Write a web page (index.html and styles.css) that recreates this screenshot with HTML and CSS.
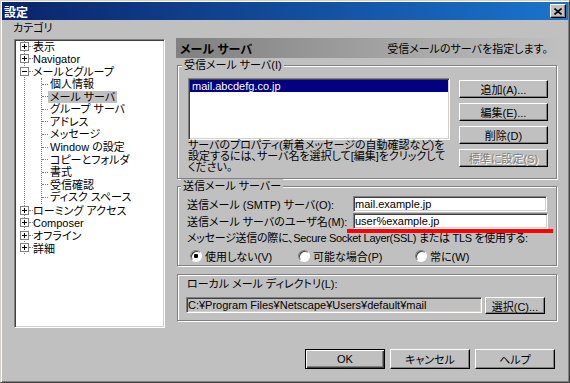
FILE: index.html
```html
<!DOCTYPE html>
<html lang="ja">
<head>
  <meta charset="UTF-8">
  <title>設定</title>
  <link rel="stylesheet" href="styles.css">
</head>
<body>

  <div class="window">
    <div class="titlebar">
      <span class="title">設定</span>
      <span class="close">
        <svg width="8" height="7" viewBox="0 0 8 7"><path d="M0.5 0.5 L7.5 6.5 M7.5 0.5 L0.5 6.5" stroke="#000" stroke-width="1.6"/></svg>
      </span>
    </div>

    <div class="main">
      <!-- category tree -->
      <div class="category">
        <div class="cat-label">カテゴリ</div>
        <div class="tree">
          <ul class="root">
            <li><div class="row"><span class="box plus"></span><span class="dash"></span><span class="label">表示</span></div></li>
            <li><div class="row"><span class="box plus"></span><span class="dash"></span><span class="label">Navigator</span></div></li>
            <li>
              <div class="row"><span class="box minus"></span><span class="dash"></span><span class="label">メールとグループ</span></div>
              <ul class="children">
                <li><div class="row"><span class="dash"></span><span class="label">個人情報</span></div></li>
                <li><div class="row"><span class="dash"></span><span class="label selected">メール サーバ</span></div></li>
                <li><div class="row"><span class="dash"></span><span class="label">グループ サーバ</span></div></li>
                <li><div class="row"><span class="dash"></span><span class="label">アドレス</span></div></li>
                <li><div class="row"><span class="dash"></span><span class="label">メッセージ</span></div></li>
                <li><div class="row"><span class="dash"></span><span class="label">Window の設定</span></div></li>
                <li><div class="row"><span class="dash"></span><span class="label">コピーとフォルダ</span></div></li>
                <li><div class="row"><span class="dash"></span><span class="label">書式</span></div></li>
                <li><div class="row"><span class="dash"></span><span class="label">受信確認</span></div></li>
                <li><div class="row"><span class="dash"></span><span class="label">ディスク スペース</span></div></li>
              </ul>
            </li>
            <li><div class="row"><span class="box plus"></span><span class="dash"></span><span class="label">ローミング アクセス</span></div></li>
            <li><div class="row"><span class="box plus"></span><span class="dash"></span><span class="label">Composer</span></div></li>
            <li><div class="row"><span class="box plus"></span><span class="dash"></span><span class="label">オフライン</span></div></li>
            <li><div class="row"><span class="box plus"></span><span class="dash"></span><span class="label">詳細</span></div></li>
          </ul>
        </div>
      </div>

      <!-- settings page -->
      <div class="settings">
        <div class="page-head">
          <span class="page-title">メール サーバ</span>
          <span class="page-desc">受信メールのサーバを指定します。</span>
        </div>

        <fieldset class="group incoming">
          <legend>受信メール サーバ(I)</legend>
          <div class="incoming-body">
            <div class="server-col">
              <div class="listbox">
                <div class="list-item selected">mail.abcdefg.co.jp</div>
              </div>
              <p class="hint">サーバのプロパティ(新着メッセージの自動確認など)を<br>設定するには、サーバ名を選択して[編集]をクリックして<br>ください。</p>
            </div>
            <div class="btn-col">
              <button class="btn">追加(A)...</button>
              <button class="btn">編集(E)...</button>
              <button class="btn">削除(D)</button>
              <button class="btn disabled">標準に設定(S)</button>
            </div>
          </div>
        </fieldset>

        <fieldset class="group outgoing">
          <legend>送信メール サーバー</legend>
          <div class="field-row">
            <label class="field-label">送信メール (SMTP) サーバ(O):</label>
            <input class="text" type="text" value="mail.example.jp">
          </div>
          <div class="field-row">
            <label class="field-label">送信メール サーバのユーザ名(M):</label>
            <span class="user-field"><input class="text" type="text" value="user%example.jp"></span>
          </div>
          <div class="ssl">メッセージ送信の際に、Secure Socket Layer(SSL) または TLS を使用する:</div>
          <div class="radios">
            <span class="option first"><span class="radio checked"></span>使用しない(V)</span>
            <span class="option second"><span class="radio"></span>可能な場合(P)</span>
            <span class="option"><span class="radio"></span>常に(W)</span>
          </div>
        </fieldset>

        <fieldset class="group local">
          <div class="dir-label">ローカル メール ディレクトリ(L):</div>
          <div class="dir-row">
            <input class="text readonly" type="text" value="C:¥Program Files¥Netscape¥Users¥default¥mail">
            <button class="btn pick">選択(C)...</button>
          </div>
        </fieldset>
      </div>
    </div>

    <div class="actions">
      <button class="btn wide default">OK</button>
      <button class="btn wide">キャンセル</button>
      <button class="btn wide">ヘルプ</button>
    </div>
  </div>

</body>
</html>
```

FILE: styles.css
```css
* {
  box-sizing: border-box;
}

body {
  margin: 0;
  font-family: "Liberation Sans", "Noto Sans CJK JP", sans-serif;
  font-size: 11px;
  font-feature-settings: "palt";
  color: #000;
  background: #c0c0c0;
}

/* Window frame */
.window {
  width: 570px;
  height: 383px;
  background: #c0c0c0;
  border: 1px solid;
  border-color: #d4d0c8 #404040 #404040 #d4d0c8;
  box-shadow: inset 1px 1px #fff, inset -1px -1px #808080;
  padding: 1px;
  display: flex;
  flex-direction: column;
}

.titlebar {
  height: 18px;
  background: linear-gradient(to right, #0a246a, #1a74cc);
  display: flex;
  align-items: center;
  justify-content: space-between;
  padding: 0 2px;
  color: #fff;
}

.title {
  font-size: 12px;
  font-weight: bold;
}

.close {
  width: 16px;
  height: 14px;
  background: #c0c0c0;
  border: 1px solid;
  border-color: #fff #000 #000 #fff;
  box-shadow: inset -1px -1px #808080;
  display: flex;
  align-items: center;
  justify-content: center;
}

.main {
  display: flex;
  padding-left: 11px;
}

/* Category tree */
.category {
  width: 152px;
}

.cat-label {
  margin-top: 2px;
  line-height: 12px;
}

.tree {
  margin: 5px 0 0 1px;
  width: 151px;
  height: 289px;
  background: #fff;
  border: 1px solid;
  border-color: #808080 #fff #fff #808080;
  box-shadow: inset 1px 1px #404040, inset -1px -1px #d4d0c8;
  padding: 0 1px;
}

.tree ul {
  list-style: none;
  margin: 0;
  padding: 0;
}

.root {
  margin-left: 8px !important;
  border-left: 1px dotted #808080;
}

.children {
  margin-left: 16px !important;
  border-left: 1px dotted #808080;
}

.row {
  height: 12.6px;
  display: flex;
  align-items: center;
  white-space: nowrap;
}

.box {
  width: 9px;
  height: 9px;
  margin-left: -5px;
  border: 1px solid #808080;
  background: #fff;
}

.box.plus {
  background:
    linear-gradient(#000, #000) center / 5px 1px no-repeat,
    linear-gradient(#000, #000) center / 1px 5px no-repeat,
    #fff;
}

.box.minus {
  background: linear-gradient(#000, #000) center / 5px 1px no-repeat, #fff;
}

.dash {
  width: 4px;
  border-top: 1px dotted #808080;
}

.children .dash {
  width: 6px;
}

.children .label {
  padding: 0 2px;
  line-height: 12px;
}

.label.selected {
  background: #c0c0c0;
}

/* Settings page */
.settings {
  margin: 18px 0 0 11px;
  width: 386px;
}

.page-head {
  height: 20px;
  display: flex;
  align-items: center;
  justify-content: space-between;
  padding: 0 14px 0 4px;
  background: linear-gradient(to right, #808080, #c0c0c0);
}

.page-title {
  font-size: 12px;
  font-weight: bold;
}

.group {
  margin: 0 0 0 1px;
  width: 380px;
  min-inline-size: 0;
  border: 1px solid #808080;
  box-shadow: 1px 1px 0 #fff, inset 1px 1px 0 #fff;
}

.group legend {
  line-height: 14px;
  padding: 0 2px;
  margin-left: -6px;
  background: #c0c0c0;
}

.incoming {
  padding: 6px 8px 5px 10px;
}

.incoming-body {
  display: flex;
  gap: 9px;
}

.listbox {
  width: 262px;
  height: 62px;
  background: #fff;
  border: 1px solid;
  border-color: #808080 #fff #fff #808080;
  box-shadow: inset 1px 1px #404040, inset -1px -1px #d4d0c8;
  padding: 1px;
}

.list-item {
  line-height: 12px;
  padding-left: 2px;
}

.list-item.selected {
  background: #000080;
  color: #fff;
}

.hint {
  margin: 0;
  line-height: 11px;
  white-space: nowrap;
}

.btn-col {
  display: flex;
  flex-direction: column;
  gap: 5px;
  padding-top: 2px;
}

.btn {
  width: 89px;
  height: 18px;
  padding: 0;
  font: inherit;
  color: #000;
  background: #c0c0c0;
  border: 1px solid;
  border-color: #fff #000 #000 #fff;
  box-shadow: inset -1px -1px #808080;
}

.btn.disabled {
  color: #808080;
  text-shadow: 1px 1px #fff;
}

.outgoing {
  padding: 3px 9px 3px 9px;
}

.field-row {
  display: flex;
  align-items: center;
  height: 16px;
  margin-bottom: 1px;
}

.field-label {
  width: 166px;
  flex-shrink: 0;
  white-space: nowrap;
}

.text {
  width: 195px;
  height: 16px;
  padding: 0 1px;
  font: inherit;
  color: #000;
  background: #fff;
  border: 1px solid;
  border-color: #808080 #fff #fff #808080;
  box-shadow: inset 1px 1px #404040, inset -1px -1px #d4d0c8;
  outline: none;
}

.user-field {
  position: relative;
  display: flex;
}

/* red marker under the user name field */
.user-field::after {
  content: "";
  position: absolute;
  left: -6px;
  right: -5px;
  top: 100%;
  height: 4px;
  background: #f00;
}

.ssl {
  margin-top: 3px;
  line-height: 12px;
  letter-spacing: -0.3px;
  white-space: nowrap;
}

.radios {
  display: flex;
  align-items: center;
  height: 12px;
  margin-top: 6px;
  padding-left: 3px;
}

.option {
  display: flex;
  flex-shrink: 0;
  align-items: center;
  gap: 3px;
}

.option.first {
  width: 108px;
}

.option.second {
  width: 117px;
}

.radio {
  width: 12px;
  height: 12px;
  flex-shrink: 0;
  border-radius: 50%;
  border: 1px solid;
  border-color: #808080 #fff #fff #808080;
  box-shadow: inset 1px 1px #404040;
  background: #fff;
}

.radio.checked {
  background: radial-gradient(circle, #000 0 2px, #fff 2.5px);
}

.local {
  margin-top: 8px;
  padding: 3px 9px 6px 9px;
}

.dir-label {
  line-height: 12px;
}

.dir-row {
  display: flex;
  gap: 3px;
  margin: 7px 0 0 -1px;
}

.text.readonly {
  width: 296px;
  background: #c0c0c0;
}

.btn.pick {
  width: 60px;
  height: 17px;
}

/* Dialog buttons */
.actions {
  display: flex;
  justify-content: flex-end;
  gap: 5px;
  margin-top: auto;
  margin-bottom: 12px;
  padding-right: 13px;
}

.btn.wide {
  width: 80px;
  height: 20px;
}

.btn.default {
  border-color: #000;
  box-shadow: inset 1px 1px #fff, inset -1px -1px #404040, inset -2px -2px #808080;
}
```
